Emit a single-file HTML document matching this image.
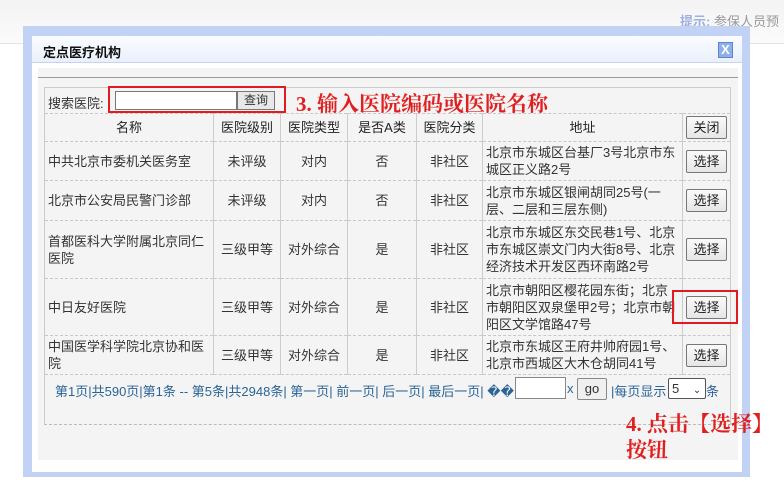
<!DOCTYPE html><html><head><meta charset="utf-8"><style>
*{margin:0;padding:0;box-sizing:border-box}
body{width:784px;height:494px;background:#fff;font-family:"Liberation Sans","Noto Sans CJK SC",sans-serif;font-size:13px;color:#333;position:relative;overflow:hidden}
.a{position:absolute}
table{position:absolute;left:44px;top:113px;width:687px;border-collapse:collapse;background:#f4f4f4}
td,th{border:1px dashed #c8c8c8;border-right:1px solid #ccc;border-left:1px solid #ccc;font-size:13px;line-height:17px;color:#333;text-align:center;padding:0 3px}
th{font-weight:normal;color:#222;height:28px}
td.l{text-align:left}
.btn{display:inline-block;border:1px solid #777;border-radius:2px;background:linear-gradient(#fafafa,#e6e6e6);padding:0 6px;height:23px;line-height:21px;font-size:13px;color:#222}
.red{color:#e02020;font-family:"Liberation Serif","Noto Serif CJK SC",serif;font-size:21px;font-weight:bold}
</style></head><body>
<div class="a" style="left:0;top:0;width:784px;height:44px;background:linear-gradient(#f3f3f3,#fbfbfb)"></div>
<div class="a" style="left:0;top:43px;width:784px;height:1px;background:#e4e4e4"></div>
<div class="a" style="left:680px;top:11px;font-size:13px;color:#9db0e0;font-weight:bold">提示:<span style="font-weight:normal;color:#999"> 参保人员预</span></div>
<div class="a" style="left:23px;top:26px;width:727px;height:451px;background:#c2d2f4"></div>
<div class="a" style="left:32px;top:36px;width:710px;height:436px;background:#fff"></div>
<div class="a" style="left:32px;top:36px;width:710px;height:27px;background:linear-gradient(#fafcff,#eaf0fb);border-bottom:1px solid #c8d4ee"></div>
<div class="a" style="left:43px;top:42px;font-size:13px;font-weight:bold;color:#111">定点医疗机构</div>
<div class="a" style="left:718px;top:42px;width:15px;height:16px;background:#8fb0e6;border:1px solid #5c86cc;color:#fff;font-size:13px;line-height:14px;text-align:center;font-weight:bold">X</div>
<div class="a" style="left:38px;top:68px;width:700px;height:392px;background:#f4f4f4"></div>
<div class="a" style="left:38px;top:77px;width:700px;height:1px;background:#999"></div>
<div class="a" style="left:44px;top:87px;width:687px;height:338px;border:1px solid #ccc;border-bottom:1px dashed #bbb"></div>
<div class="a" style="left:48px;top:93px;font-size:13px">搜索医院:</div>
<div class="a" style="left:115px;top:91px;width:122px;height:19px;border:1px solid #777;background:#fff"></div>
<div class="a" style="left:237px;top:91px;width:38px;height:19px;border:1px solid #777;background:#e8e8e8;font-size:12px;line-height:17px;text-align:center">查询</div>
<div class="a" style="left:108px;top:86px;width:178px;height:27px;border:2px solid #e01b24"></div>
<div class="a red" style="left:296px;top:88px;white-space:nowrap">3. 输入医院编码或医院名称</div>
<table>
<tr><th style="width:169px">名称</th><th style="width:67px">医院级别</th><th style="width:67px">医院类型</th><th style="width:69px">是否A类</th><th style="width:66px">医院分类</th><th style="width:200px">地址</th><th><span class="btn">关闭</span></th></tr>
<tr style="height:39px"><td class="l">中共北京市委机关医务室</td><td>未评级</td><td>对内</td><td>否</td><td>非社区</td><td class="l">北京市东城区台基厂3号北京市东城区正义路2号</td><td><span class="btn">选择</span></td></tr>
<tr style="height:40px"><td class="l">北京市公安局民警门诊部</td><td>未评级</td><td>对内</td><td>否</td><td>非社区</td><td class="l">北京市东城区银闸胡同25号(一层、二层和三层东侧)</td><td><span class="btn">选择</span></td></tr>
<tr style="height:58px"><td class="l">首都医科大学附属北京同仁医院</td><td>三级甲等</td><td>对外综合</td><td>是</td><td>非社区</td><td class="l">北京市东城区东交民巷1号、北京市东城区崇文门内大街8号、北京经济技术开发区西环南路2号</td><td><span class="btn">选择</span></td></tr>
<tr style="height:57px"><td class="l">中日友好医院</td><td>三级甲等</td><td>对外综合</td><td>是</td><td>非社区</td><td class="l">北京市朝阳区樱花园东街；北京市朝阳区双泉堡甲2号；北京市朝阳区文学馆路47号</td><td><span class="btn">选择</span></td></tr>
<tr style="height:39px"><td class="l">中国医学科学院北京协和医院</td><td>三级甲等</td><td>对外综合</td><td>是</td><td>非社区</td><td class="l">北京市东城区王府井帅府园1号、北京市西城区大木仓胡同41号</td><td><span class="btn">选择</span></td></tr>
</table>
<div class="a" style="left:672px;top:290px;width:66px;height:34px;border:2px solid #e01b24"></div>
<div class="a" style="left:55px;top:381px;font-size:13px;color:#2a6496;white-space:nowrap">第1页|共590页|第1条 -- 第5条|共2948条| 第一页| 前一页| 后一页| 最后一页| ��</div>
<div class="a" style="left:515px;top:377px;width:51px;height:22px;border:1px solid #888;background:#fff"></div>
<div class="a" style="left:567px;top:381px;color:#2a6496">x</div>
<div class="a" style="left:577px;top:378px;width:30px;height:22px;border:1px solid #888;border-radius:2px;background:#f0f0f0;text-align:center;line-height:20px">go</div>
<div class="a" style="left:611px;top:381px;color:#2a6496">|每页显示</div>
<div class="a" style="left:668px;top:378px;width:38px;height:21px;border:1px solid #555;border-radius:2px;background:#fff;padding-left:3px;line-height:19px">5 <span style="font-size:10px;margin-left:10px">⌄</span></div>
<div class="a" style="left:706px;top:381px;color:#2a6496">条</div>
<div class="a red" style="left:626px;top:411px;line-height:26px;white-space:nowrap">4. 点击【选择】<br>按钮</div>
</body></html>
